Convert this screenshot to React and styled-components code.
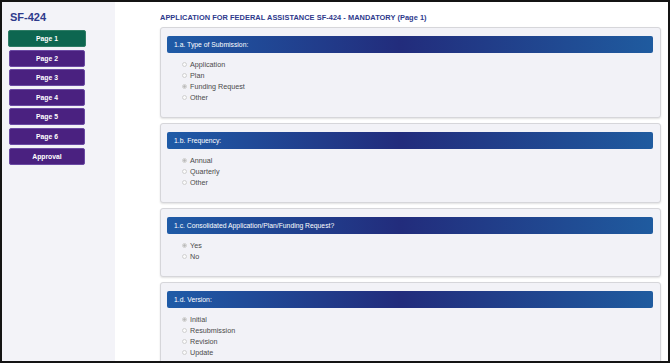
import React from "react";
import styled, { createGlobalStyle } from "styled-components";

const Global = createGlobalStyle`
  html, body { margin: 0; padding: 0; background: #111; }
  body { font-family: "Liberation Sans", Arial, sans-serif; }
`;

const Frame = styled.div`
  box-sizing: border-box;
  width: 670px;
  height: 363px;
  border: 2px solid #141414;
  display: flex;
  overflow: hidden;
  background: #fff;
`;

const Sidebar = styled.aside`
  width: 113px;
  flex-shrink: 0;
  background: #f3f3f8;
  padding: 9px 0 0 7px;
  box-sizing: border-box;
`;

const Brand = styled.h1`
  margin: 0 0 7px 1px;
  font-size: 11px;
  line-height: 12px;
  font-weight: 700;
  color: #2e3a8c;
`;

const NavList = styled.nav`
  display: flex;
  flex-direction: column;
  gap: 2.6px;
`;

const NavButton = styled.button`
  box-sizing: border-box;
  width: ${(p) => (p.$active ? "78px" : "76px")};
  margin-left: ${(p) => (p.$active ? "-1px" : "0")};
  height: 17px;
  padding: 0;
  border-radius: 2px;
  border: 1px solid ${(p) => (p.$active ? "#2f7d66" : "#6b4aa3")};
  background: ${(p) => (p.$active ? "#0d6650" : "#4a2180")};
  color: #fff;
  font-family: "Liberation Sans", Arial, sans-serif;
  font-size: 6.8px;
  font-weight: 700;
  text-align: center;
  cursor: pointer;
`;

const Main = styled.main`
  flex: 1;
  padding: 11px 7px 0 45px;
  box-sizing: border-box;
  display: flex;
  flex-direction: column;
`;

const Title = styled.h2`
  margin: 0 0 4px 0;
  font-size: 7.4px;
  line-height: 10px;
  font-weight: 700;
  color: #2e3a8c;
  letter-spacing: 0.05px;
`;

const Cards = styled.div`
  display: flex;
  flex-direction: column;
  gap: 5px;
`;

const Card = styled.section`
  flex-shrink: 0;
  background: #f2f2f7;
  border: 1px solid #d6d6da;
  border-radius: 3px;
  box-shadow: 0 1px 2px rgba(0, 0, 0, 0.12);
  padding: 8px 7px 14px 6px;
`;

const CardHeader = styled.div`
  height: 17px;
  display: flex;
  align-items: center;
  padding-left: 7px;
  border-radius: 2px;
  background: linear-gradient(90deg, #1f5ba7 0%, #222c7c 48%, #1f5b9f 100%);
  color: #fff;
  font-size: 6.8px;
`;

const Options = styled.div`
  margin-top: 6px;
  padding-left: 15px;
  display: flex;
  flex-direction: column;
`;

const Option = styled.label`
  height: 11px;
  display: flex;
  align-items: center;
  gap: 3px;
  font-size: 7.2px;
  color: #4a4a4a;
`;

const Radio = styled.span`
  width: 5px;
  height: 5px;
  border-radius: 50%;
  box-sizing: border-box;
  border: 0.8px solid #d0d0d0;
  background: ${(p) => (p.$checked ? "radial-gradient(circle, #b8b8b8 40%, #e4e4e4 70%)" : "#fafafa")};
`;

const sections = [
  { title: "1.a. Type of Submission:", opts: ["Application", "Plan", "Funding Request", "Other"], checked: 2 },
  { title: "1.b. Frequency:", opts: ["Annual", "Quarterly", "Other"], checked: 0 },
  { title: "1.c. Consolidated Application/Plan/Funding Request?", opts: ["Yes", "No"], checked: 0 },
  { title: "1.d. Version:", opts: ["Initial", "Resubmission", "Revision", "Update"], checked: 0 },
];

const pages = ["Page 1", "Page 2", "Page 3", "Page 4", "Page 5", "Page 6", "Approval"];

export default function App() {
  return (
    <>
      <Global />
      <Frame>
        <Sidebar>
          <Brand>SF-424</Brand>
          <NavList>
            {pages.map((p, i) => (
              <NavButton key={p} $active={i === 0}>{p}</NavButton>
            ))}
          </NavList>
        </Sidebar>
        <Main>
          <Title>APPLICATION FOR FEDERAL ASSISTANCE SF-424 - MANDATORY (Page 1)</Title>
          <Cards>
            {sections.map((s) => (
              <Card key={s.title}>
                <CardHeader>{s.title}</CardHeader>
                <Options>
                  {s.opts.map((o, i) => (
                    <Option key={o}>
                      <Radio $checked={i === s.checked} />
                      {o}
                    </Option>
                  ))}
                </Options>
              </Card>
            ))}
          </Cards>
        </Main>
      </Frame>
    </>
  );
}
